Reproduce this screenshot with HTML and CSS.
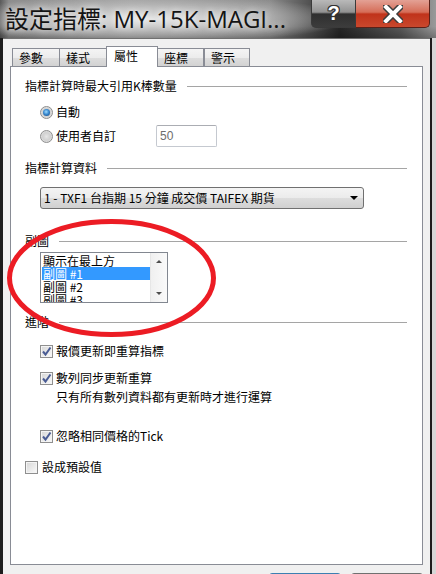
FILE: index.html
```html
<!DOCTYPE html>
<html lang="zh-Hant">
<head>
<meta charset="utf-8">
<title>設定指標</title>
<link rel="stylesheet" href="styles.css">
</head>
<body>
<div class="window">
  <div class="titlebar">
    <span class="title">設定指標: MY-15K-MAGI...</span>
    <div class="caps">
      <div class="cap cap-help">?</div>
      <div class="cap cap-close">
        <svg width="20" height="18" viewBox="0 0 20 18"><path d="M3 2 L17 16 M17 2 L3 16" stroke="#3b3b3b" stroke-width="7" stroke-linecap="square"/><path d="M3 2 L17 16 M17 2 L3 16" stroke="#ffffff" stroke-width="4" stroke-linecap="square"/></svg>
      </div>
    </div>
  </div>
  <div class="body">
    <div class="tabs">
      <div class="tab t1">參數</div>
      <div class="tab t2">樣式</div>
      <div class="tab sel">屬性</div>
      <div class="tab t4">座標</div>
      <div class="tab t5">警示</div>
    </div>
    <div class="panel">
      <div class="group-h g1"><span>指標計算時最大引用K棒數量</span></div>
      <div class="opt r1"><span class="radio on"></span><span>自動</span></div>
      <div class="opt r2"><span class="radio"></span><span>使用者自訂</span><span class="field">50</span></div>
      <div class="group-h g2"><span>指標計算資料</span></div>
      <div class="combo"><span>1 - TXF1 台指期 15 分鐘 成交價 TAIFEX 期貨</span><span class="arrow"></span></div>
      <div class="group-h g3"><span>副圖</span></div>
      <div class="listbox">
        <div class="items">
          <div class="item">顯示在最上方</div>
          <div class="item selected">副圖 #1</div>
          <div class="item">副圖 #2</div>
          <div class="item">副圖 #3</div>
        </div>
        <div class="scroll"><span class="up"></span><span class="down"></span></div>
      </div>
      <div class="group-h g4"><span>進階</span></div>
      <div class="opt c1"><span class="check on"><svg width="11" height="11" viewBox="0 0 11 11"><path d="M2 5.5 L4.5 8.5 L9.5 1.5" fill="none" stroke="#4a5c94" stroke-width="2"/></svg></span><span>報價更新即重算指標</span></div>
      <div class="opt c2"><span class="check on"><svg width="11" height="11" viewBox="0 0 11 11"><path d="M2 5.5 L4.5 8.5 L9.5 1.5" fill="none" stroke="#4a5c94" stroke-width="2"/></svg></span><span>數列同步更新重算</span></div>
      <div class="note">只有所有數列資料都有更新時才進行運算</div>
      <div class="opt c3"><span class="check on"><svg width="11" height="11" viewBox="0 0 11 11"><path d="M2 5.5 L4.5 8.5 L9.5 1.5" fill="none" stroke="#4a5c94" stroke-width="2"/></svg></span><span>忽略相同價格的Tick</span></div>
      <div class="opt c4"><span class="check"></span><span>設成預設值</span></div>
    </div>
    <div class="footer">
      <div class="btn ok"></div>
      <div class="btn cancel"></div>
    </div>
  </div>
  <svg class="mark" width="436" height="574" viewBox="0 0 436 574"><ellipse cx="111.5" cy="278" rx="102" ry="56.5" fill="none" stroke="#ec1c24" stroke-width="5"/></svg>
</div>
</body>
</html>
```
FILE: styles.css
```css
html, body { margin: 0; padding: 0; }
body {
  font-family: "Noto Sans CJK TC", "Noto Sans", sans-serif;
  font-size: 12px;
  color: #000;
  background: #222;
}
.window {
  width: 436px;
  height: 574px;
  position: relative;
  overflow: hidden;
  background: linear-gradient(to right, #1c1c1c 0, #1c1c1c 432px, #d6d6d6 432px);
}
.titlebar {
  height: 38px;
  display: flex;
  justify-content: space-between;
  align-items: flex-start;
  background:
    radial-gradient(ellipse 200px 24px at 150px 19px, rgba(232,232,232,0.95), rgba(200,200,200,0.55) 60%, rgba(160,160,160,0) 100%),
    linear-gradient(to bottom, rgba(0,0,0,0) 70%, rgba(0,0,0,0.25) 100%),
    linear-gradient(to right, #5a5a5a 0, #8c8c8c 2%, #9c9c9c 30%, #8a8a8a 62%, #262626 78%, #5a5a5a 92%, #9a9a9a 100%);
}
.title {
  font-family: "Open Sans", "Noto Sans CJK TC", sans-serif;
  font-size: 24px;
  line-height: 38px;
  padding-left: 5px;
  color: #141414;
  white-space: nowrap;
  text-shadow: 0 0 6px rgba(255,255,255,0.7), 0 0 12px rgba(255,255,255,0.5);
}
.caps {
  display: flex;
  margin-right: 6px;
}
.cap {
  height: 28px;
  box-sizing: border-box;
  display: flex;
  align-items: center;
  justify-content: center;
}
.cap-help {
  width: 45px;
  border: 1px solid #3a3a3a;
  border-top: none;
  border-radius: 0 0 0 5px;
  background: linear-gradient(to bottom, #b9b9b9 0%, #929292 45%, #2f2f2f 52%, #3c3c3c 100%);
  font-family: "Liberation Sans", sans-serif;
  font-weight: bold;
  font-size: 20px;
  color: #fff;
  text-shadow: 1px 0 0 #333, -1px 0 0 #333, 0 1px 0 #333, 0 -1px 0 #333, 1px 1px 0 #333, -1px -1px 0 #333, 1px -1px 0 #333, -1px 1px 0 #333;
}
.cap-close {
  width: 74px;
  border: 1px solid #5a2018;
  border-top: none;
  border-left: none;
  border-radius: 0 0 5px 0;
  background: linear-gradient(to bottom, #e3a195 0%, #d56d58 45%, #c0331b 52%, #c9482d 100%);
}
.body {
  margin: 0 6px 0 3px;
  height: 536px;
  box-sizing: border-box;
  background: #f0f0f0;
  border-top: 1px solid #707070;
  padding-top: 7px;
}
.tabs {
  display: flex;
  align-items: flex-end;
  height: 21px;
  margin-bottom: -1px;
  padding-left: 9px;
  position: relative;
  z-index: 2;
}
.tab {
  box-sizing: border-box;
  height: 18px;
  margin-bottom: 1px;
  border: 1px solid #898c95;
  border-bottom: none;
  padding-left: 6px;
  line-height: 17px;
  background: linear-gradient(to bottom, #f4f4f4 0%, #ececec 50%, #dedede 51%, #d2d2d2 100%);
}
.t1 { width: 48px; }
.t2 { width: 48px; margin-left: -1px; }
.tab.sel {
  width: 52px;
  height: 21px;
  margin-left: -1px;
  margin-bottom: 0;
  padding-left: 7px;
  line-height: 18px;
  background: #fff;
  position: relative;
  z-index: 1;
}
.t4 { width: 47px; margin-left: -1px; }
.t5 { width: 46px; margin-left: 0; }
.panel {
  margin-left: 7px;
  width: 413px;
  height: 499px;
  box-sizing: border-box;
  border: 1px solid #898c95;
  background: #fff;
  padding: 0 15px 0 14px;
  display: flex;
  flex-direction: column;
  align-items: flex-start;
}
.group-h {
  align-self: stretch;
  display: flex;
  align-items: center;
  gap: 10px;
  height: 16px;
  line-height: 16px;
  white-space: nowrap;
}
.group-h::after {
  content: "";
  flex: 1;
  height: 1px;
  background: #a5a5a5;
}
.g1 { margin-top: 11px; }
.g2 { margin-top: 13px; }
.g3 { margin-top: 24px; }
.g4 { margin-top: 11px; }
.opt {
  display: flex;
  align-items: center;
  gap: 3px;
  margin-left: 15px;
  height: 16px;
  line-height: 16px;
  white-space: nowrap;
}
.r1 { margin-top: 10px; }
.r2 { margin-top: 5px; height: 22px; }
.c1 { margin-top: 13px; }
.c2 { margin-top: 11px; }
.c3 { margin-top: 23px; }
.c4 { margin-top: 15px; margin-left: 0; gap: 4px; }
.radio {
  width: 13px;
  height: 13px;
  box-sizing: border-box;
  border-radius: 50%;
  border: 1px solid #8d8d8d;
  background: radial-gradient(circle at 50% 50%, #e6e6e6 0, #d0d0d0 50%, #f4f4f4 100%);
  display: flex;
  align-items: center;
  justify-content: center;
}
.radio.on::after {
  content: "";
  width: 7px;
  height: 7px;
  border-radius: 50%;
  background: radial-gradient(circle at 45% 40%, #9fdcff 0, #3a8ad0 45%, #0f3f78 100%);
}
.field {
  margin-left: 37px;
  width: 61px;
  height: 22px;
  box-sizing: border-box;
  border: 1px solid #c5c9d0;
  border-top-color: #abadb3;
  border-radius: 2px;
  background: #fff;
  color: #6d6d6d;
  padding-left: 3px;
  line-height: 20px;
  font-family: "Liberation Sans", sans-serif;
  font-size: 12px;
}
.combo {
  margin-top: 11px;
  margin-left: 15px;
  width: 324px;
  height: 22px;
  box-sizing: border-box;
  border: 1px solid #707070;
  border-radius: 3px;
  background: linear-gradient(to bottom, #f4f4f4 0%, #ebebeb 50%, #dddddd 51%, #d0d0d0 100%);
  display: flex;
  align-items: center;
  justify-content: space-between;
  padding: 0 5px 0 3px;
  line-height: 20px;
  white-space: nowrap;
}
.arrow {
  width: 0;
  height: 0;
  border-left: 4px solid transparent;
  border-right: 4px solid transparent;
  border-top: 4px solid #000;
}
.listbox {
  margin-top: 3px;
  margin-left: 15px;
  width: 128px;
  height: 51px;
  box-sizing: border-box;
  border: 1px solid #828790;
  background: #fff;
  display: flex;
  overflow: hidden;
}
.items {
  flex: 1;
  padding: 1px 0 0 1px;
}
.item {
  height: 13px;
  line-height: 13px;
  padding-left: 1px;
  white-space: nowrap;
}
.item.selected {
  background: #3399ff;
  color: #fff;
}
.scroll {
  width: 17px;
  box-sizing: border-box;
  border-left: 1px solid #e6e6e6;
  background: linear-gradient(to right, #f0f0f0, #fafafa);
  display: flex;
  flex-direction: column;
  justify-content: space-between;
  align-items: center;
  padding: 7px 0 7px;
}
.up, .down {
  width: 0;
  height: 0;
  border-left: 3px solid transparent;
  border-right: 3px solid transparent;
}
.up { border-bottom: 3px solid #4d4d4d; }
.down { border-top: 3px solid #4d4d4d; }
.check {
  width: 13px;
  height: 13px;
  box-sizing: border-box;
  border: 1px solid #8f8f8f;
  background: linear-gradient(135deg, #d6d6d6 0%, #ececec 60%, #fafafa 100%);
  box-shadow: inset 0 0 0 1px #f4f4f4;
  display: flex;
  align-items: center;
  justify-content: center;
}
.note {
  margin-top: 3px;
  margin-left: 31px;
  height: 16px;
  line-height: 16px;
  white-space: nowrap;
}
.footer {
  display: flex;
  justify-content: flex-end;
  gap: 10px;
  padding-right: 7px;
  margin-top: 8px;
}
.btn {
  width: 72px;
  height: 23px;
  box-sizing: border-box;
  border-radius: 3px;
  background: linear-gradient(to bottom, #f2f2f2, #dcdcdc);
}
.btn.ok { border: 1px solid #3c7fb1; }
.btn.cancel { border: 1px solid #707070; }
.mark {
  position: absolute;
  left: 0;
  top: 0;
  pointer-events: none;
}
```
